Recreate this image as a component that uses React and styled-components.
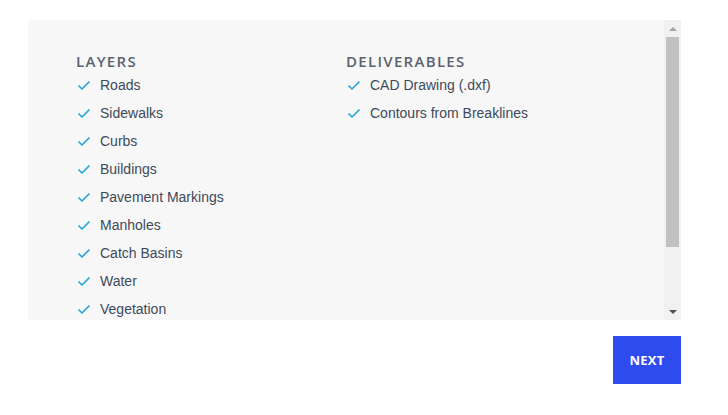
import React from 'react'
import styled, { createGlobalStyle } from 'styled-components'

const Global = createGlobalStyle`
  html, body {
    margin: 0;
    padding: 0;
    background: #fff;
  }
  body {
    font-family: "Liberation Sans", Arial, sans-serif;
  }
`

const Page = styled.div`
  width: 653px;
  padding: 20px 0 0 28px;
`

const Panel = styled.div`
  display: flex;
  height: 300px;
  background: #f7f7f7;
`

const Content = styled.div`
  flex: 1;
  overflow: hidden;
  display: flex;
  padding: 31px 0 0 48px;
`

const Column = styled.div`
  width: ${p => p.w}px;
`

const Heading = styled.div`
  font-family: "Open Sans", sans-serif;
  font-weight: 600;
  font-size: 15px;
  line-height: 20px;
  letter-spacing: 1.3px;
  color: #5b636e;
  text-transform: uppercase;
`

const List = styled.ul`
  list-style: none;
  margin: 0;
  padding: 0;
`

const Item = styled.li`
  display: flex;
  align-items: center;
  height: 28px;
  font-size: 14px;
  color: #3e4a5a;
`

const Check = styled.svg`
  width: 14px;
  height: 14px;
  margin: 0 9px 0 1px;
  flex-shrink: 0;
`

const Scrollbar = styled.div`
  width: 17px;
  display: flex;
  flex-direction: column;
  align-items: center;
  background: #f1f1f1;
`

const Arrow = styled.div`
  height: 17px;
  display: flex;
  align-items: center;
  justify-content: center;
  &::before {
    content: "";
    border-left: 4px solid transparent;
    border-right: 4px solid transparent;
    ${p => p.down ? 'border-top: 4px solid #505050;' : 'border-bottom: 4px solid #a3a3a3;'}
  }
`

const Thumb = styled.div`
  width: 13px;
  height: 210px;
  background: #c1c1c1;
`

const Spacer = styled.div`
  flex: 1;
`

const Footer = styled.div`
  display: flex;
  justify-content: flex-end;
  padding-top: 16px;
`

const NextButton = styled.button`
  width: 68px;
  height: 48px;
  border: none;
  background: #2e4cee;
  color: #fff;
  font-family: "Open Sans", sans-serif;
  font-weight: 700;
  font-size: 13px;
  letter-spacing: 0.2px;
  cursor: pointer;
`

const layers = ['Roads', 'Sidewalks', 'Curbs', 'Buildings', 'Pavement Markings', 'Manholes', 'Catch Basins', 'Water', 'Vegetation']
const deliverables = ['CAD Drawing (.dxf)', 'Contours from Breaklines']

const CheckIcon = () => (
  <Check viewBox="0 0 14 14">
    <polyline points="1.5,7.5 5,11 12.5,3.5" fill="none" stroke="#1a9fdc" strokeWidth="1.5" />
  </Check>
)

const Section = ({ title, items, w }) => (
  <Column w={w}>
    <Heading>{title}</Heading>
    <List>
      {items.map(i => (
        <Item key={i}><CheckIcon />{i}</Item>
      ))}
    </List>
  </Column>
)

export default function App() {
  return (
    <Page>
      <Global />
      <Panel>
        <Content>
          <Section title="Layers" items={layers} w={270} />
          <Section title="Deliverables" items={deliverables} w={260} />
        </Content>
        <Scrollbar>
          <Arrow />
          <Thumb />
          <Spacer />
          <Arrow down />
        </Scrollbar>
      </Panel>
      <Footer>
        <NextButton>NEXT</NextButton>
      </Footer>
    </Page>
  )
}
